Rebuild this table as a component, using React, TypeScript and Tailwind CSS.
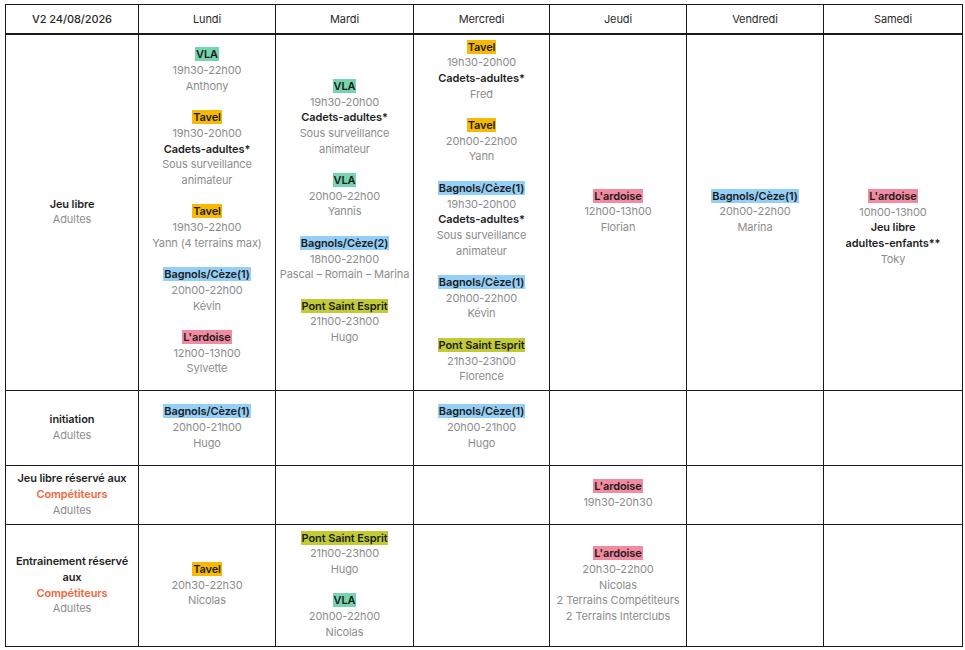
import React from "react";

type Kind = "tag" | "b" | "g" | "o";
type Line = { t: string; k: Kind; c?: string };
type Block = Line[];

const GREEN = "bg-[#76d5ae]";
const ORANGE = "bg-[#f7b904]";
const BLUE = "bg-[#93cff6]";
const PINK = "bg-[#f28aa1]";
const OLIVE = "bg-[#c1cb34]";

const tag = (t: string, c: string): Line => ({ t, k: "tag", c });
const g = (t: string): Line => ({ t, k: "g" });
const b = (t: string): Line => ({ t, k: "b" });
const o = (t: string): Line => ({ t, k: "o" });

const VLA = (...l: Line[]): Block => [tag("VLA", GREEN), ...l];
const TAVEL = (...l: Line[]): Block => [tag("Tavel", ORANGE), ...l];
const BAG1 = (...l: Line[]): Block => [tag("Bagnols/Cèze(1)", BLUE), ...l];
const BAG2 = (...l: Line[]): Block => [tag("Bagnols/Cèze(2)", BLUE), ...l];
const ARD = (...l: Line[]): Block => [tag("L'ardoise", PINK), ...l];
const PSE = (...l: Line[]): Block => [tag("Pont Saint Esprit", OLIVE), ...l];

const days = ["Lundi", "Mardi", "Mercredi", "Jeudi", "Vendredi", "Samedi"];

type Cell = { blocks: Block[]; pad?: string };
type Row = { h: string; label: Block; cells: Cell[] };

const C = (...blocks: Block[]): Cell => ({ blocks });

const rows: Row[] = [
  {
    h: "h-[357px]",
    label: [b("Jeu libre"), g("Adultes")],
    cells: [
      C(
        VLA(g("19h30-22h00"), g("Anthony")),
        TAVEL(g("19h30-20h00"), b("Cadets-adultes*"), g("Sous surveillance"), g("animateur")),
        TAVEL(g("19h30-22h00"), g("Yann (4 terrains max)")),
        BAG1(g("20h00-22h00"), g("Kévin")),
        ARD(g("12h00-13h00"), g("Sylvette"))
      ),
      C(
        VLA(g("19h30-20h00"), b("Cadets-adultes*"), g("Sous surveillance"), g("animateur")),
        VLA(g("20h00-22h00"), g("Yannis")),
        BAG2(g("18h00-22h00"), g("Pascal – Romain – Marina")),
        PSE(g("21h00-23h00"), g("Hugo"))
      ),
      C(
        TAVEL(g("19h30-20h00"), b("Cadets-adultes*"), g("Fred")),
        TAVEL(g("20h00-22h00"), g("Yann")),
        BAG1(g("19h30-20h00"), b("Cadets-adultes*"), g("Sous surveillance"), g("animateur")),
        BAG1(g("20h00-22h00"), g("Kévin")),
        PSE(g("21h30-23h00"), g("Florence"))
      ),
      C(ARD(g("12h00-13h00"), g("Florian"))),
      C(BAG1(g("20h00-22h00"), g("Marina"))),
      { blocks: [ARD(g("10h00-13h00"), b("Jeu libre"), b("adultes-enfants**"), g("Toky"))], pad: "pt-[37px] pb-[5px]" },
    ],
  },
  {
    h: "h-[75px]",
    label: [b("initiation"), g("Adultes")],
    cells: [
      C(BAG1(g("20h00-21h00"), g("Hugo"))),
      C(),
      C(BAG1(g("20h00-21h00"), g("Hugo"))),
      C(),
      C(),
      C(),
    ],
  },
  {
    h: "h-[59px]",
    label: [b("Jeu libre réservé aux"), o("Compétiteurs"), g("Adultes")],
    cells: [C(), C(), C(), C(ARD(g("19h30-20h30"))), C(), C()],
  },
  {
    h: "h-[122px]",
    label: [b("Entrainement réservé"), b("aux"), o("Compétiteurs"), g("Adultes")],
    cells: [
      C(TAVEL(g("20h30-22h30"), g("Nicolas"))),
      C(PSE(g("21h00-23h00"), g("Hugo")), VLA(g("20h00-22h00"), g("Nicolas"))),
      C(),
      C(ARD(g("20h30-22h00"), g("Nicolas"), g("2 Terrains Compétiteurs"), g("2 Terrains Interclubs"))),
      C(),
      C(),
    ],
  },
];

function LineView({ l }: { l: Line }) {
  if (l.k === "tag")
    return (
      <div>
        <span className={`${l.c} px-[1px] font-semibold text-[#1c1c1c]`}>{l.t}</span>
      </div>
    );
  if (l.k === "b") return <div className="font-semibold text-[#1f1f1f]">{l.t}</div>;
  if (l.k === "o") return <div className="font-semibold text-[#f2663a]">{l.t}</div>;
  return <div className="text-[#8d8d8d]">{l.t}</div>;
}

function BlockView({ bl }: { bl: Block }) {
  return (
    <div>
      {bl.map((l, i) => (
        <LineView key={i} l={l} />
      ))}
    </div>
  );
}

export default function App() {
  return (
    <div
      className="w-[965px] h-[650px] bg-white pt-[4px] pl-[5px] overflow-hidden"
      style={{ fontFamily: "Inter, 'Noto Sans', sans-serif" }}
    >
      <table className="table-fixed border-collapse w-[957px] text-[11px] leading-[15.7px] tracking-[-0.1px]">
        <colgroup>
          <col className="w-[133px]" />
          <col className="w-[137px]" />
          <col className="w-[138px]" />
          <col className="w-[136px]" />
          <col className="w-[137px]" />
          <col className="w-[137px]" />
          <col className="w-[139px]" />
        </colgroup>
        <thead>
          <tr className="h-[29px]">
            <th className="border border-[#1a1a1a] border-b-2 font-medium text-[#2a2a2a] text-center align-middle p-0 pt-[2px]">
              V2 24/08/2026
            </th>
            {days.map((d) => (
              <th
                key={d}
                className="border border-[#1a1a1a] border-b-2 font-normal text-[#2a2a2a] text-center align-middle p-0 pt-[2px]"
              >
                {d}
              </th>
            ))}
          </tr>
        </thead>
        <tbody>
          {rows.map((r, ri) => (
            <tr key={ri} className={r.h}>
              <td className="border border-[#1a1a1a] text-center align-middle px-1 py-[5px]">
                <BlockView bl={r.label} />
              </td>
              {r.cells.map((c, ci) => (
                <td
                  key={ci}
                  className={`border border-[#1a1a1a] text-center align-middle px-0 ${c.pad ?? "py-[5px]"}`}
                >
                  <div className="flex flex-col gap-[15.7px] whitespace-nowrap">
                    {c.blocks.map((bl, bi) => (
                      <BlockView key={bi} bl={bl} />
                    ))}
                  </div>
                </td>
              ))}
            </tr>
          ))}
        </tbody>
      </table>
    </div>
  );
}
